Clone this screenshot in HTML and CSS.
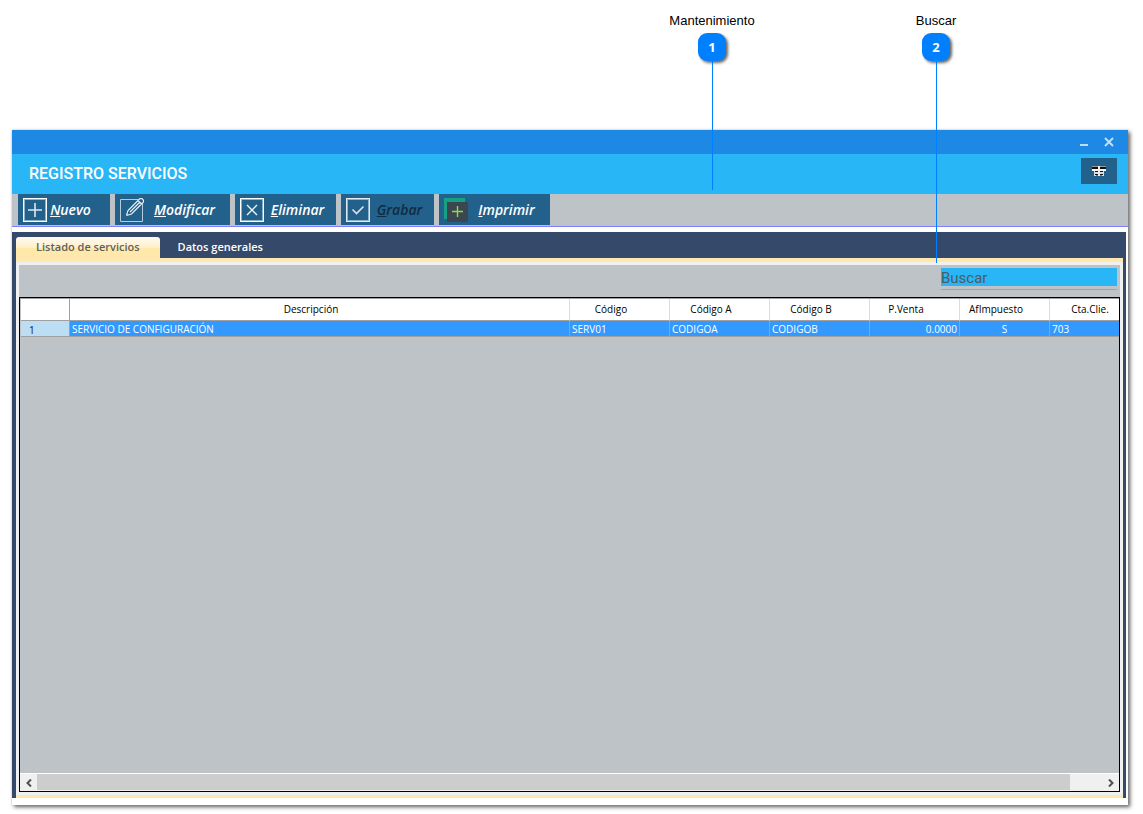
FILE: index.html
```html
<!DOCTYPE html>
<html lang="es">
<head>
<meta charset="utf-8">
<title>Registro servicios</title>
<link rel="stylesheet" href="styles.css">
</head>
<body>
<main class="window">
  <div class="titlebar">
    <button class="win-btn" aria-label="Minimizar"><svg width="10" height="10" viewBox="0 0 10 10"><path d="M1 8H9" stroke="#bbdefb" stroke-width="2"/></svg></button>
    <button class="win-btn" aria-label="Cerrar"><svg width="10" height="10" viewBox="0 0 10 10"><path d="M1 1L9 9M9 1L1 9" stroke="#c5e2fb" stroke-width="1.8"/></svg></button>
  </div>
  <header class="header">
    <h1 class="title">REGISTRO SERVICIOS</h1>
    <button class="menu-btn" aria-label="Columnas">
      <svg width="14" height="10" viewBox="0 0 14 10" shape-rendering="crispEdges"><path d="M0 0H14V1H0Z" fill="#999"/><path d="M0 1H14V3H0Z" fill="#111"/><path d="M0 3H14V5H0Z" fill="#f4f4f4"/><path d="M2 5H12V10H2Z" fill="#ddd"/><path d="M3 5H11V6H3ZM3 8H11V9H3Z" fill="#111"/><path d="M4 9H10V10H4Z" fill="#777"/><path d="M6 0H8V10H6Z" fill="#eee"/></svg>
    </button>
  </header>
  <nav class="toolbar">
    <button class="tool nuevo"><svg width="24" height="24" viewBox="0 0 24 24" fill="none" stroke="#fff"><rect x=".5" y=".5" width="23" height="23"/><rect x="1.5" y="1.5" width="21" height="21" stroke="#8fb0c5"/><path d="M5 12H19M12 5V19" stroke="#dde8ef" stroke-width="1.6"/></svg><span class="label"><u>N</u>uevo</span></button>
    <button class="tool modificar"><svg width="24" height="24" viewBox="0 0 24 24" fill="none" stroke="#b5cbd9"><path d="M18 1.500H.5V23.500H22.500V6"/><path d="M6.500 17.500L8 12.500L19.500 1Q21-.3 22.700 1.300T23 4.500L11.500 16L6.500 17.500M18 2.500L21.500 6M10 14L20 4" stroke="#eef4f8" stroke-width="1.100"/></svg><span class="label"><u>M</u>odificar</span></button>
    <button class="tool eliminar"><svg width="24" height="24" viewBox="0 0 24 24" fill="none" stroke="#fff"><rect x=".5" y=".5" width="23" height="23"/><rect x="1.500" y="1.500" width="21" height="21" stroke="#8fb0c5"/><path d="M7 7L17 17M17 7L7 17" stroke="#eef4f7" stroke-width="1.400"/></svg><span class="label"><u>E</u>liminar</span></button>
    <button class="tool grabar" disabled><svg width="24" height="24" viewBox="0 0 24 24" fill="none" stroke="#e3e9ed"><rect x=".5" y=".5" width="23" height="23"/><rect x="1.500" y="1.500" width="21" height="21" stroke="#8fb0c5"/><path d="M6.500 11.500L10.500 15.500L17.500 8.500" stroke="#d5e1e9" stroke-width="1.700"/></svg><span class="label"><u>G</u>rabar</span></button>
    <button class="tool imprimir"><svg width="24" height="24" viewBox="0 0 24 24"><path d="M0 0H21V21H0Z" fill="#16a085"/><path d="M3 4H24V24H3Z" fill="#3b4650"/><path d="M8 13.500H19M13.500 8V19" stroke="#8fdc3e" stroke-width="1.400"/></svg><span class="label"><u>I</u>mprimir</span></button>
  </nav>
  <section class="pages">
    <div class="tabs" role="tablist">
      <button class="tab active" role="tab" aria-selected="true">Listado de servicios</button>
      <button class="tab" role="tab" aria-selected="false">Datos generales</button>
    </div>
    <div class="page" role="tabpanel">
      <div class="searchbar">
        <div class="search-field"><input class="search" type="text" placeholder="Buscar" aria-label="Buscar"></div>
      </div>
      <div class="grid">
        <div class="grid-body">
          <table class="table">
            <colgroup><col class="c-num"><col><col class="c-code"><col class="c-code"><col class="c-code"><col class="c-small"><col class="c-small"><col class="c-last"></colgroup>
            <thead><tr><th></th><th>Descripción</th><th>Código</th><th>Código A</th><th>Código B</th><th>P.Venta</th><th>AfImpuesto</th><th class="last">Cta.Clie.</th></tr></thead>
            <tbody><tr><td class="rownum">1</td><td>SERVICIO DE CONFIGURACIÓN</td><td>SERV01</td><td>CODIGOA</td><td>CODIGOB</td><td class="num">0.0000</td><td class="mid">S</td><td>703</td></tr></tbody>
          </table>
        </div>
        <div class="scrollbar">
          <button class="arrow" aria-label="Izquierda"><svg width="6" height="8" viewBox="0 0 6 8"><path d="M5 .5L1.500 4L5 7.500" fill="none" stroke="#505050" stroke-width="2"/></svg></button>
          <div class="track"><div class="thumb"></div></div>
          <button class="arrow" aria-label="Derecha"><svg width="6" height="8" viewBox="0 0 6 8"><path d="M1 .5L4.500 4L1 7.500" fill="none" stroke="#505050" stroke-width="2"/></svg></button>
        </div>
      </div>
    </div>
  </section>
</main>
<div class="callout callout-tools"><span class="callout-text">Mantenimiento</span><span class="badge">1</span><span class="line"></span></div>
<div class="callout callout-search"><span class="callout-text">Buscar</span><span class="badge">2</span><span class="line"></span></div>
</body>
</html>
```
FILE: styles.css
```css
* { box-sizing: border-box; }
html { height: 100%; }
body {
  position: relative;
  display: flex;
  min-height: 100%;
  margin: 0;
  padding: 130px 15px 9px 12px;
  background: #fff;
  font-family: "Open Sans", "Noto Sans", sans-serif;
}
button { margin: 0; padding: 0; border: 0; border-radius: 0; background: none; font: inherit; color: inherit; }
svg { display: block; flex: none; }

.window {
  flex: 1;
  min-width: 0;
  display: flex;
  flex-direction: column;
  padding-bottom: 7px;
  background: #fff;
  box-shadow: 0 0 1px #aaa, 2px 2px 4px rgba(0, 0, 0, .65);
}
.titlebar { display: flex; align-items: center; justify-content: flex-end; gap: 15px; height: 24px; padding-right: 14px; background: #1e88e5; }
.header { display: flex; align-items: center; justify-content: space-between; height: 40px; padding: 0 11px 6px 17px; background: #29b6f6; }
.title { margin: 0; padding-top: 5px; font: 500 16px/20px Roboto, sans-serif; color: #fff; }
.menu-btn { display: flex; align-items: center; justify-content: center; width: 36px; height: 26px; background: #22618c; }

.toolbar { display: flex; gap: 5px; height: 33px; padding: 0 6px 1px; background: #bdc3c7; border-bottom: 1px solid #8080ff; }
.tool { display: flex; align-items: center; height: 31px; padding: 0 5px; background: #22618c; color: #fff; font: italic 600 14px/20px "Open Sans", sans-serif; }
.tool:disabled { color: #102c40; }
.label { flex: 1; text-align: center; white-space: nowrap; }
.nuevo { width: 92px; padding-right: 16px; }
.modificar { width: 115px; }
.eliminar { width: 101px; }
.grabar { width: 93px; }
.imprimir { width: 111px; }

.pages { flex: 1; display: flex; flex-direction: column; margin: 5px 2px 0 0; padding: 0 3px 0 4px; background: #35496a; }
.tabs { display: flex; align-items: flex-end; height: 26px; }
.tab { height: 21px; padding: 0 18px 1px; font-size: 11px; line-height: 18px; font-weight: 600; color: #fff; white-space: nowrap; }
.tab.active { padding: 0 20px 1px; color: #5f5f5f; border-radius: 3px 3px 0 0; background: linear-gradient(#fffaf0, #fff0cb 50%, #ffe8a6 51%, #ffe8b0); }
.page { flex: 1; display: flex; flex-direction: column; padding: 3px; background: #f0f0f0; border-top: 4px solid #ffe8b0; border-bottom: 3px solid #ffe8b0; }
.searchbar { display: flex; justify-content: flex-end; height: 32px; padding: 3px 3px 0; background: #bdc3c7; }
.search-field { width: 176px; height: 22px; border-bottom: 1px solid #98a5ad; }
.search { display: block; width: 100%; height: 18px; padding: 1px 0 0; border: 0; border-radius: 0; outline: 0; background: #29b6f6; font: 15px/17px Roboto, sans-serif; color: #4c5c66; }
.search::placeholder { color: #4c5c66; opacity: 1; }

.grid { flex: 1; display: flex; flex-direction: column; min-width: 0; border: 1px solid #000; background: #bdc3c7; }
.grid-body { flex: 1; padding: 0 0 0 1px; border-top: 1px solid #a0a0a0; overflow: hidden; }
.table { width: calc(100% + 12px); table-layout: fixed; border-collapse: separate; border-spacing: 0; font-size: 10px; line-height: 15px; }
.c-num { width: 49px; }
.c-code { width: 100px; }
.c-small { width: 90px; }
.c-last { width: 81px; }
th { height: 22px; padding: 0 17px 0 0; background: #fff; border-right: 1px solid #dcdcdc; border-bottom: 1px solid #a0a0a0; font-weight: 500; text-align: center; color: #000; white-space: nowrap; }
th.last { padding: 0; }
th:first-child { border-right-color: #a0a0a0; }
td { height: 16px; padding: 1px 2px 0; line-height: 14px; background: #3399ff; border-right: 1px solid #a0a0a0; border-bottom: 1px solid #a0a0a0; color: #fff; white-space: nowrap; }
td.rownum { padding: 3px 0 0 8px; line-height: 12px; background: #bbdef5; color: #222; }
.num { text-align: right; }
.mid { text-align: center; }

.scrollbar { display: flex; height: 18px; border-top: 1px solid #fff; background: #f0f0f0; }
.arrow { display: flex; align-items: center; justify-content: center; width: 17px; }
.track { flex: 1; padding-right: 32px; }
.thumb { height: 16px; background: #cdcdcd; }

.callout { position: absolute; top: 11px; display: flex; flex-direction: column; align-items: center; width: 100px; pointer-events: none; }
.callout-tools { left: 662px; height: 179px; }
.callout-search { left: 886px; height: 252px; }
.callout-text { font: 13px/20px "Liberation Sans", sans-serif; color: #000; }
.badge { width: 28px; height: 28px; margin-top: 2px; border-radius: 9px; background: #0080ff; box-shadow: 2px 2px 3px rgba(0, 0, 0, .6); color: #fff; font-size: 13px; line-height: 28px; font-weight: 700; text-align: center; }
.line { flex: 1; width: 1px; background: #0080ff; }
```
